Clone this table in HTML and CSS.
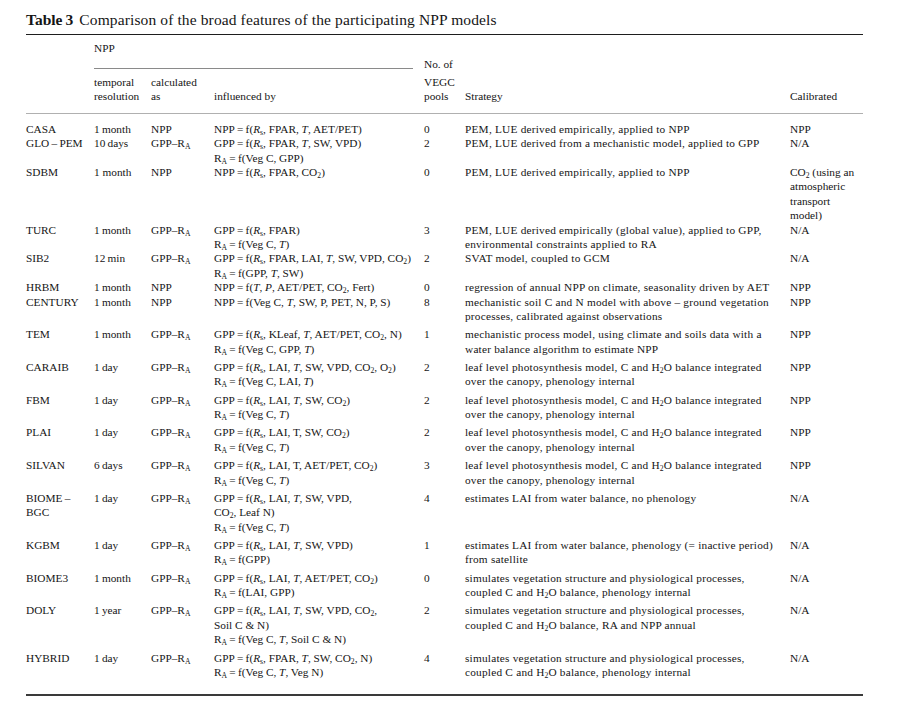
FILE: index.html
```html
<!DOCTYPE html>
<html lang="en">
<head>
<meta charset="utf-8">
<title>Table 3</title>
<link rel="stylesheet" href="styles.css">
</head>
<body>
<div class="page">
  <div class="caption"><b>Table&#8201;3</b> Comparison of the broad features of the participating NPP models</div>

  <div class="thead">
    <div class="h-npp">NPP<div class="npp-rule"></div></div>
    <div class="h-temp">temporal<br>resolution</div>
    <div class="h-calc">calculated<br>as</div>
    <div class="h-infl">influenced by</div>
    <div class="h-vegc"><div class="noof">No. of</div>VEGC<br>pools</div>
    <div class="h-strat">Strategy</div>
    <div class="h-cal">Calibrated</div>
  </div>

  <div class="tbody">
    <div class="row">
      <div>CASA</div><div>1&#8201;month</div><div>NPP</div>
      <div>NPP&#8201;=&#8201;f(<i>R</i><sub>s</sub>, FPAR, <i>T</i>, AET/PET)</div>
      <div>0</div><div class="st">PEM, LUE derived empirically, applied to NPP</div><div>NPP</div>
    </div>
    <div class="row">
      <div>GLO&#8201;–&#8201;PEM</div><div>10&#8201;days</div><div>GPP–R<sub>A</sub></div>
      <div>GPP&#8201;=&#8201;f(<i>R</i><sub>s</sub>, FPAR, <i>T</i>, SW, VPD)<br>R<sub>A</sub>&#8201;=&#8201;f(Veg C, GPP)</div>
      <div>2</div><div class="st">PEM, LUE derived from a mechanistic model, applied to GPP</div><div>N/A</div>
    </div>
    <div class="row">
      <div>SDBM</div><div>1 month</div><div>NPP</div>
      <div>NPP&#8201;=&#8201;f(<i>R</i><sub>s</sub>, FPAR, CO<sub>2</sub>)</div>
      <div>0</div><div class="st">PEM, LUE derived empirically, applied to NPP</div>
      <div>CO<sub>2</sub> (using an<br>atmospheric<br>transport<br>model)</div>
    </div>
    <div class="row">
      <div>TURC</div><div>1&#8201;month</div><div>GPP–R<sub>A</sub></div>
      <div>GPP&#8201;=&#8201;f(<i>R</i><sub>s</sub>, FPAR)<br>R<sub>A</sub>&#8201;=&#8201;f(Veg C, <i>T</i>)</div>
      <div>3</div><div class="st">PEM, LUE derived empirically (global value), applied to GPP,<br>environmental constraints applied to RA</div><div>N/A</div>
    </div>
    <div class="row">
      <div>SIB2</div><div>12&#8201;min</div><div>GPP–R<sub>A</sub></div>
      <div>GPP&#8201;=&#8201;f(<i>R</i><sub>s</sub>, FPAR, LAI, <i>T</i>, SW, VPD, CO<sub>2</sub>)<br>R<sub>A</sub>&#8201;=&#8201;f(GPP, <i>T</i>, SW)</div>
      <div>2</div><div class="st">SVAT model, coupled to GCM</div><div>N/A</div>
    </div>
    <div class="row">
      <div>HRBM</div><div>1&#8201;month</div><div>NPP</div>
      <div>NPP&#8201;=&#8201;f(<i>T</i>, <i>P</i>, AET/PET, CO<sub>2</sub>, Fert)</div>
      <div>0</div><div class="st">regression of annual NPP on climate, seasonality driven by AET</div><div>NPP</div>
    </div>
    <div class="row">
      <div>CENTURY</div><div>1&#8201;month</div><div>NPP</div>
      <div>NPP&#8201;=&#8201;f(Veg C, <i>T</i>, SW, P, PET, N, P, S)</div>
      <div>8</div><div class="st">mechanistic soil C and N model with above – ground vegetation<br>processes, calibrated against observations</div><div>NPP</div>
    </div>
    <div class="row sp">
      <div>TEM</div><div>1&#8201;month</div><div>GPP–R<sub>A</sub></div>
      <div>GPP&#8201;=&#8201;f(<i>R</i><sub>s</sub>, KLeaf, <i>T</i>, AET/PET, CO<sub>2</sub>, N)<br>R<sub>A</sub>&#8201;=&#8201;f(Veg C, GPP, <i>T</i>)</div>
      <div>1</div><div class="st">mechanistic process model, using climate and soils data with a<br>water balance algorithm to estimate NPP</div><div>NPP</div>
    </div>
    <div class="row sp">
      <div>CARAIB</div><div>1&#8201;day</div><div>GPP–R<sub>A</sub></div>
      <div>GPP&#8201;=&#8201;f(<i>R</i><sub>s</sub>, LAI, <i>T</i>, SW, VPD, CO<sub>2</sub>, O<sub>2</sub>)<br>R<sub>A</sub>&#8201;=&#8201;f(Veg C, LAI, <i>T</i>)</div>
      <div>2</div><div class="st">leaf level photosynthesis model, C and H<sub>2</sub>O balance integrated<br>over the canopy, phenology internal</div><div>NPP</div>
    </div>
    <div class="row sp">
      <div>FBM</div><div>1&#8201;day</div><div>GPP–R<sub>A</sub></div>
      <div>GPP&#8201;=&#8201;f(<i>R</i><sub>s</sub>, LAI, <i>T</i>, SW, CO<sub>2</sub>)<br>R<sub>A</sub>&#8201;=&#8201;f(Veg C, <i>T</i>)</div>
      <div>2</div><div class="st">leaf level photosynthesis model, C and H<sub>2</sub>O balance integrated<br>over the canopy, phenology internal</div><div>NPP</div>
    </div>
    <div class="row sp">
      <div>PLAI</div><div>1&#8201;day</div><div>GPP–R<sub>A</sub></div>
      <div>GPP&#8201;=&#8201;f(<i>R</i><sub>s</sub>, LAI, T, SW, CO<sub>2</sub>)<br>R<sub>A</sub>&#8201;=&#8201;f(Veg C, <i>T</i>)</div>
      <div>2</div><div class="st">leaf level photosynthesis model, C and H<sub>2</sub>O balance integrated<br>over the canopy, phenology internal</div><div>NPP</div>
    </div>
    <div class="row sp">
      <div>SILVAN</div><div>6&#8201;days</div><div>GPP–R<sub>A</sub></div>
      <div>GPP&#8201;=&#8201;f(<i>R</i><sub>s</sub>, LAI, T, AET/PET, CO<sub>2</sub>)<br>R<sub>A</sub>&#8201;=&#8201;f(Veg C, <i>T</i>)</div>
      <div>3</div><div class="st">leaf level photosynthesis model, C and H<sub>2</sub>O balance integrated<br>over the canopy, phenology internal</div><div>NPP</div>
    </div>
    <div class="row sp">
      <div>BIOME&#8201;–<br>BGC</div><div>1&#8201;day</div><div>GPP–R<sub>A</sub></div>
      <div>GPP&#8201;=&#8201;f(<i>R</i><sub>s</sub>, LAI, <i>T</i>, SW, VPD,<br>CO<sub>2</sub>, Leaf N)<br>R<sub>A</sub>&#8201;=&#8201;f(Veg C, <i>T</i>)</div>
      <div>4</div><div class="st">estimates LAI from water balance, no phenology</div><div>N/A</div>
    </div>
    <div class="row sp">
      <div>KGBM</div><div>1&#8201;day</div><div>GPP–R<sub>A</sub></div>
      <div>GPP&#8201;=&#8201;f(<i>R</i><sub>s</sub>, LAI, <i>T</i>, SW, VPD)<br>R<sub>A</sub>&#8201;=&#8201;f(GPP)</div>
      <div>1</div><div class="st">estimates LAI from water balance, phenology (= inactive period)<br>from satellite</div><div>N/A</div>
    </div>
    <div class="row sp">
      <div>BIOME3</div><div>1&#8201;month</div><div>GPP–R<sub>A</sub></div>
      <div>GPP&#8201;=&#8201;f(<i>R</i><sub>s</sub>, LAI, <i>T</i>, AET/PET, CO<sub>2</sub>)<br>R<sub>A</sub>&#8201;=&#8201;f(LAI, GPP)</div>
      <div>0</div><div class="st">simulates vegetation structure and physiological processes,<br>coupled C and H<sub>2</sub>O balance, phenology internal</div><div>N/A</div>
    </div>
    <div class="row sp">
      <div>DOLY</div><div>1&#8201;year</div><div>GPP–R<sub>A</sub></div>
      <div>GPP&#8201;=&#8201;f(<i>R</i><sub>s</sub>, LAI, <i>T</i>, SW, VPD, CO<sub>2</sub>,<br>Soil C &amp; N)<br>R<sub>A</sub>&#8201;=&#8201;f(Veg C, <i>T</i>, Soil C &amp; N)</div>
      <div>2</div><div class="st">simulates vegetation structure and physiological processes,<br>coupled C and H<sub>2</sub>O balance, RA and NPP annual</div><div>N/A</div>
    </div>
    <div class="row sp">
      <div>HYBRID</div><div>1&#8201;day</div><div>GPP–R<sub>A</sub></div>
      <div>GPP&#8201;=&#8201;f(<i>R</i><sub>s</sub>, FPAR, <i>T</i>, SW, CO<sub>2</sub>, N)<br>R<sub>A</sub>&#8201;=&#8201;f(Veg C, <i>T</i>, Veg N)</div>
      <div>4</div><div class="st">simulates vegetation structure and physiological processes,<br>coupled C and H<sub>2</sub>O balance, phenology internal</div><div>N/A</div>
    </div>
  </div>
</div>
</body>
</html>
```

FILE: styles.css
```css
html, body {
  margin: 0;
  padding: 0;
  background: #ffffff;
}

body {
  font-family: "Liberation Serif", "Times New Roman", serif;
  color: #151515;
}

.page {
  width: 837px;
  padding: 11px 0 0 26px;
  --cols: 68px 57px 63px 210px 41px 325px 73px;
}

.caption {
  font-size: 15.5px;
  line-height: 18px;
  letter-spacing: 0.12px;
  padding-bottom: 5px;
  border-bottom: 1.3px solid #1e1e1e;
  white-space: nowrap;
}

.caption b {
  font-weight: bold;
  letter-spacing: 0;
  margin-right: 2px;
}

.thead,
.row {
  display: grid;
  grid-template-columns: var(--cols);
  font-size: 11.3px;
  line-height: 14.4px;
  white-space: nowrap;
}

.thead {
  grid-template-rows: auto auto;
  padding: 6.3px 0 9.4px;
  border-bottom: 1.5px solid #b0b0b0;
}

.h-npp {
  grid-column: 2 / 5;
  grid-row: 1;
}

.npp-rule {
  margin: 12.3px 11px 0 0;
  border-top: 1px solid #8a8a8a;
}

.h-temp,
.h-calc {
  grid-row: 2;
  margin-top: 5.8px;
}

.h-temp { grid-column: 2; }
.h-calc { grid-column: 3; }

.h-infl {
  grid-column: 4;
  grid-row: 2;
  align-self: end;
}

.h-vegc,
.h-strat,
.h-cal {
  grid-row: 1 / 3;
  align-self: end;
}

.h-vegc { grid-column: 5; }
.h-strat { grid-column: 6; }
.h-cal { grid-column: 7; }

.noof {
  margin-bottom: 3.6px;
}

.tbody {
  padding: 7.8px 0 14.5px;
  border-bottom: 2px solid #3a3a3a;
}

.row.sp {
  padding-top: 3.9px;
}

.st {
  letter-spacing: 0.22px;
}

sub {
  font-size: 68%;
  line-height: 0;
  letter-spacing: 0;
  vertical-align: -0.28em;
}

i {
  font-style: italic;
}
```
